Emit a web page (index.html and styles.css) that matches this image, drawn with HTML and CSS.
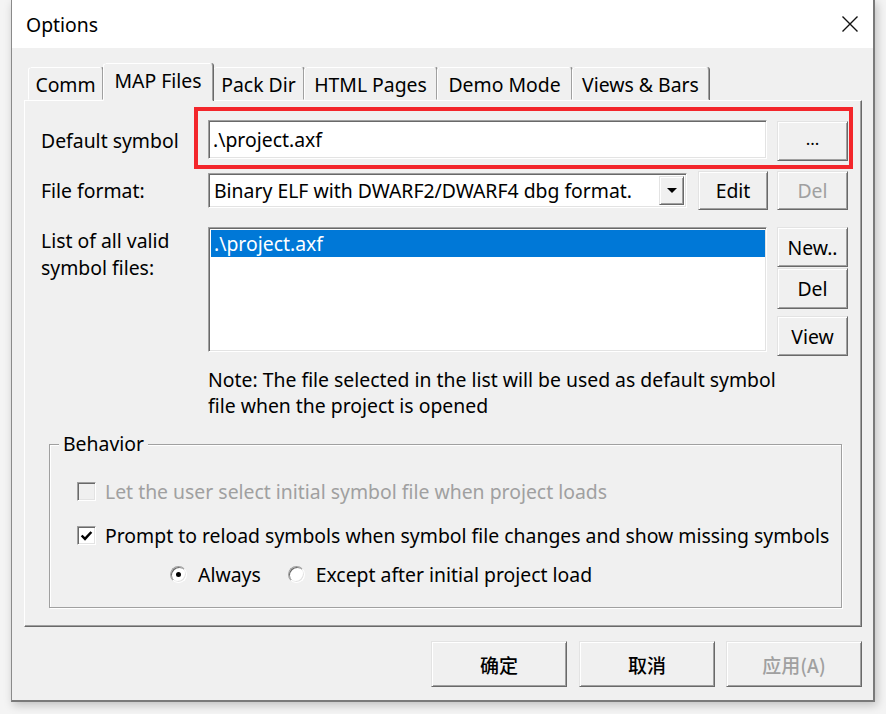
FILE: index.html
```html
<!DOCTYPE html>
<html>
<head>
<meta charset="utf-8">
<title>Options</title>
<link rel="stylesheet" href="styles.css">
</head>
<body>
<div class="window">
  <div class="titlebar">
    <span class="title">Options</span>
    <svg class="close" viewBox="0 0 16 16"><path d="M0.5 0.5 L15.5 15.5 M15.5 0.5 L0.5 15.5"/></svg>
  </div>
  <div class="client">
    <div class="tabs">
      <div class="tab w-comm">Comm</div>
      <div class="tab sel w-map">MAP Files</div>
      <div class="tab w-pack">Pack Dir</div>
      <div class="tab w-html">HTML Pages</div>
      <div class="tab w-demo">Demo Mode</div>
      <div class="tab w-views">Views &amp; Bars</div>
    </div>
    <div class="panel">
      <div class="row row1">
        <div class="lbl">Default symbol</div>
        <div class="fieldgroup">
          <div class="edit edit-main">.\project.axf</div>
          <div class="btn btn-dots">...</div>
          <span class="redframe"></span>
        </div>
      </div>
      <div class="row row2">
        <div class="lbl">File format:</div>
        <div class="combo">
          <div class="combo-text">Binary ELF with DWARF2/DWARF4 dbg format.</div>
          <div class="combo-arrow"><span class="tri"></span></div>
        </div>
        <div class="btn btn-edit">Edit</div>
        <div class="btn btn-del disabled">Del</div>
      </div>
      <div class="row row3">
        <div class="lbl lbl-multi">List of all valid<br>symbol files:</div>
        <div class="listbox">
          <div class="item selected">.\project.axf</div>
        </div>
        <div class="btnstack">
          <div class="btn btn-new">New..</div>
          <div class="btn btn-del2">Del</div>
          <div class="btn btn-view">View</div>
        </div>
      </div>
      <div class="note">Note: The file selected in the list will be used as default symbol<br>file when the project is opened</div>
      <div class="group">
        <div class="group-title">Behavior</div>
        <div class="opt opt1 disabled">
          <span class="chk chk-disabled"></span>
          <span>Let the user select initial symbol file when project loads</span>
        </div>
        <div class="opt opt2">
          <span class="chk"><svg viewBox="0 0 17 17"><path d="M3 8.5 L6.8 12.3 L14 4.5"/></svg></span>
          <span>Prompt to reload symbols when symbol file changes and show missing symbols</span>
        </div>
        <div class="opt opt3">
          <span class="radio on"><span class="dot"></span></span>
          <span class="radio-lbl">Always</span>
          <span class="radio"></span>
          <span>Except after initial project load</span>
        </div>
      </div>
    </div>
    <div class="footer">
      <div class="btn fbtn">确定</div>
      <div class="btn fbtn">取消</div>
      <div class="btn fbtn disabled">应用(A)</div>
    </div>
  </div>
</div>
</body>
</html>
```

FILE: styles.css
```css
* { box-sizing: border-box; }
html, body { margin: 0; padding: 0; }
body {
  width: 886px;
  height: 714px;
  overflow: hidden;
  background: #f4f4f4;
  font-family: "Noto Sans", "Noto Sans CJK SC", sans-serif;
  font-size: 19.4px;
  color: #000;
}
.window {
  margin-left: 11px;
  width: 864px;
  height: 702px;
  background: #f0f0f0;
  border: 1px solid #8a8a8a;
  border-top: 0;
  border-bottom: 2px solid #7a7a7a;
  border-right: 2px solid #7a7a7a;
  box-shadow: 2px 3px 9px rgba(0, 0, 0, 0.22);
  display: flex;
  flex-direction: column;
}
.titlebar {
  height: 48px;
  background: #fff;
  display: flex;
  align-items: center;
  justify-content: space-between;
  padding: 0 15px 0 14px;
}
.title { font-size: 19.4px; }
.close { width: 16px; height: 16px; }
.close path { stroke: #111; stroke-width: 1.4; fill: none; }

.client {
  flex: 1;
  padding: 15px 11px 0 12px;
  display: flex;
  flex-direction: column;
}
.tabs {
  display: flex;
  align-items: flex-end;
  height: 37px;
  padding-left: 4px;
  position: relative;
  z-index: 1;
}
.tab {
  height: 33px;
  border: 1px solid;
  border-color: #fff #a0a0a0 transparent #fff;
  box-shadow: 1px 0 0 #696969;
  border-radius: 3px 3px 0 0;
  display: flex;
  align-items: center;
  justify-content: center;
  padding-top: 2px;
  white-space: nowrap;
  background: #f0f0f0;
}
.tab.sel {
  height: 38px;
  margin-bottom: -1px;
  padding-top: 0;
  padding-bottom: 4px;
  position: relative;
  z-index: 2;
}
.w-comm { width: 75px; }
.w-map { width: 110px; }
.w-pack { width: 91px; }
.w-html { width: 133px; }
.w-demo { width: 135px; }
.w-views { width: 137px; }

.panel {
  width: 838px;
  height: 527px;
  border: 1px solid;
  border-color: #fff #696969 #696969 #fff;
  box-shadow: inset -1px -1px 0 #a0a0a0;
  padding: 19px 0 0 16px;
}
.row { display: flex; }
.lbl { width: 157px; margin-right: 10px; white-space: nowrap; }
.row1 { height: 41px; align-items: center; }
.fieldgroup {
  position: relative;
  display: flex;
  align-items: flex-start;
  height: 41px;
}
.edit {
  background: #fff;
  border: 1px solid;
  border-color: #a0a0a0 #fff #fff #a0a0a0;
  box-shadow: inset 1px 1px 0 #696969, inset -1px -1px 0 #e3e3e3;
  padding-left: 4px;
  display: flex;
  align-items: center;
}
.edit-main { width: 559px; height: 39px; }
.btn {
  background: #f0f0f0;
  border: 1px solid;
  border-color: #e3e3e3 #696969 #696969 #e3e3e3;
  box-shadow: inset 1px 1px 0 #fff, inset -1px -1px 0 #a0a0a0;
  display: flex;
  align-items: center;
  justify-content: center;
  white-space: nowrap;
}
.btn.disabled, .disabled { color: #a0a0a0; }
.btn-dots { width: 71px; height: 40px; margin: 1px 0 0 10px; padding-bottom: 6px; font-size: 17px; }
.redframe {
  position: absolute;
  left: -14px;
  top: -13px;
  right: -5px;
  bottom: -8px;
  border: 4px solid #f3262b;
  pointer-events: none;
}

.row2 { margin-top: 10px; height: 39px; align-items: center; }
.combo {
  width: 479px;
  height: 35px;
  display: flex;
  background: #fff;
  border: 1px solid;
  border-color: #a0a0a0 #fff #fff #a0a0a0;
  box-shadow: inset 1px 1px 0 #696969, inset -1px -1px 0 #e3e3e3;
  padding: 2px;
}
.combo-text { flex: 1; display: flex; align-items: center; padding-left: 3px; white-space: nowrap; overflow: hidden; }
.combo-arrow {
  width: 25px;
  background: #f0f0f0;
  border: 1px solid;
  border-color: #e3e3e3 #696969 #696969 #e3e3e3;
  box-shadow: inset 1px 1px 0 #fff, inset -1px -1px 0 #a0a0a0;
  display: flex;
  align-items: center;
  justify-content: center;
}
.tri {
  width: 0; height: 0;
  border-left: 5px solid transparent;
  border-right: 5px solid transparent;
  border-top: 5px solid #000;
}
.btn-edit { width: 70px; height: 39px; margin-left: 11px; }
.btn-del { width: 71px; height: 39px; margin-left: 9px; }

.row3 { margin-top: 17px; align-items: flex-start; }
.lbl-multi { line-height: 27px; }
.listbox {
  width: 559px;
  height: 125px;
  background: #fff;
  border: 1px solid;
  border-color: #a0a0a0 #fff #fff #a0a0a0;
  box-shadow: inset 1px 1px 0 #696969, inset -1px -1px 0 #e3e3e3;
  padding: 2px 1px 0 2px;
}
.item { height: 27px; line-height: 27px; padding-left: 3px; }
.item.selected { background: #0078d7; color: #fff; }
.btnstack { margin-left: 10px; display: flex; flex-direction: column; width: 71px; }
.btn-new { height: 40px; }
.btn-del2 { height: 41px; margin-top: 1px; }
.btn-view { height: 40px; margin-top: 7px; }

.note { margin: 11px 0 0 167px; line-height: 26px; white-space: nowrap; }

.group {
  margin: 25px 0 0 8px;
  width: 793px;
  height: 164px;
  border: 1px solid #a0a0a0;
  box-shadow: 1px 1px 0 #fff, inset 1px 1px 0 #fff;
}
.group-title {
  display: table;
  margin: -14px 0 0 9px;
  padding: 0 4px;
  line-height: 26px;
  background: #f0f0f0;
}
.opt {
  display: flex;
  align-items: center;
  height: 26px;
  margin-left: 27px;
  white-space: nowrap;
}
.opt1 { margin-top: 21px; }
.opt2 { margin-top: 18px; }
.opt3 { margin-top: 13px; padding-left: 93px; }
.chk {
  width: 19px;
  height: 19px;
  margin-right: 9px;
  background: #fff;
  border: 1px solid;
  border-color: #a0a0a0 #fff #fff #a0a0a0;
  box-shadow: inset 1px 1px 0 #696969, inset -1px -1px 0 #e3e3e3;
  display: flex;
  align-items: center;
  justify-content: center;
}
.chk-disabled { background: #f0f0f0; }
.chk svg { width: 15px; height: 15px; }
.chk path { stroke: #000; stroke-width: 2.8; fill: none; }
.radio {
  width: 17px;
  height: 17px;
  border-radius: 50%;
  background: #fff;
  border: 1px solid;
  border-color: #a0a0a0 #fff #fff #a0a0a0;
  box-shadow: inset 1px 1px 0 #696969, inset -1px -1px 0 #e3e3e3;
  margin-right: 11px;
  display: flex;
  align-items: center;
  justify-content: center;
}
.dot { width: 5px; height: 5px; border-radius: 50%; background: #000; }
.radio-lbl { margin-right: 27px; }

.footer {
  display: flex;
  justify-content: flex-end;
  margin-top: 14px;
  width: 838px;
}
.fbtn {
  width: 136px;
  height: 46px;
  margin-left: 12px;
  font-family: "Noto Sans CJK SC", sans-serif;
  font-size: 19px;
  font-weight: 500;
}
.fbtn:last-child { margin-left: 11px; }
```
